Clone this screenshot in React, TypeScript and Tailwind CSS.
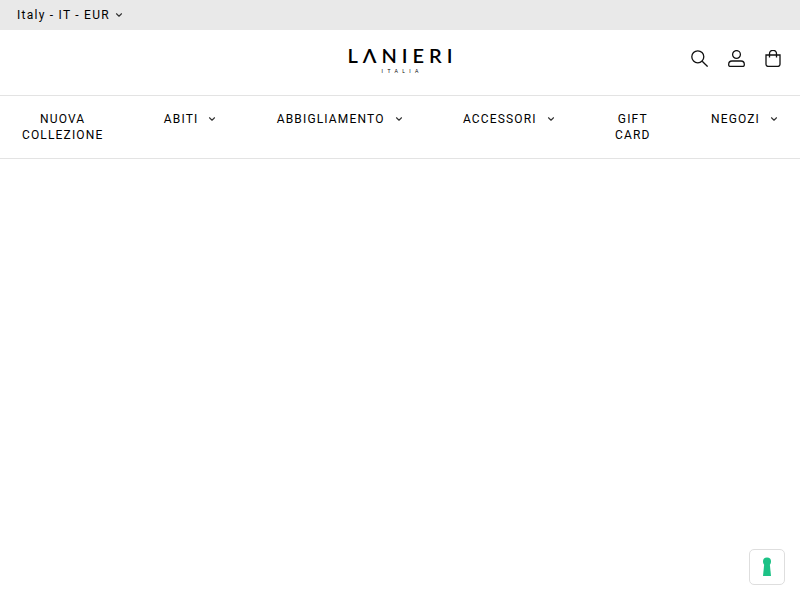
import React from 'react';
import { ChevronDown } from 'lucide-react';

const navItems = [
  { lines: ['NUOVA', 'COLLEZIONE'], caret: false },
  { lines: ['ABITI'], caret: true },
  { lines: ['ABBIGLIAMENTO'], caret: true },
  { lines: ['ACCESSORI'], caret: true },
  { lines: ['GIFT', 'CARD'], caret: false },
  { lines: ['NEGOZI'], caret: true },
];

function Logo() {
  return (
    <div className="flex flex-col items-center text-black font-['Lato',sans-serif] mt-[-7px]">
      <div className="text-[20px] leading-[20px] font-semibold tracking-[5px] mr-[-5px]">LΛNIERI</div>
      <div className="text-[5px] leading-[6px] tracking-[4.400px] mr-[-4.400px] mt-[3px]">ITALIA</div>
    </div>
  );
}

export default function App() {
  return (
    <div className="relative h-[600px] w-[800px] overflow-hidden bg-white font-['Roboto',sans-serif] text-black">
      {/* top bar */}
      <div className="flex h-[30px] items-center bg-[#e9e9e9] pl-[17px] text-[12px] tracking-[1.25px]">
        <span>Italy - IT - EUR</span>
        <ChevronDown className="ml-[4px] h-[10px] w-[10px] text-[#333]" strokeWidth={2.7} />
      </div>

      {/* header */}
      <div className="relative flex h-[66px] items-center justify-center border-b border-[#e3e3e3]">
        <Logo />
        <div className="absolute right-[19px] top-[20px] flex items-center gap-[20px]">
          <svg width="17" height="17" viewBox="0 0 17 17" fill="none" stroke="#111" strokeWidth="1.3">
            <circle cx="6.800" cy="6.800" r="6" />
            <path d="M11.200 11.200 16.600 16.600" />
          </svg>
          <svg width="17" height="17" viewBox="0 0 17 17" fill="none" stroke="#111" strokeWidth="1.3">
            <circle cx="8.500" cy="4.500" r="3.900" />
            <path d="M4 11h9a3.300 3.300 0 0 1 3.300 3.300v.8a1.300 1.300 0 0 1-1.300 1.300H2a1.300 1.300 0 0 1-1.300-1.300v-.8A3.300 3.300 0 0 1 4 11Z" />
          </svg>
          <svg width="16" height="17" viewBox="0 0 16 17" fill="none" stroke="#111" strokeWidth="1.3">
            <path d="M1 5h14v9.300a2.100 2.100 0 0 1-2.100 2.100H3.100A2.100 2.100 0 0 1 1 14.300Z" />
            <path d="M4.500 7.500V3.800a3.200 3.200 0 0 1 7 0v3.700" />
          </svg>
        </div>
      </div>

      {/* nav */}
      <nav className="flex h-[63px] items-start justify-between border-b border-[#e3e3e3] pl-[22px] pr-[22px] pt-[15px] text-[12px] leading-[16px] tracking-[1.150px]">
        {navItems.map((item) => (
          <div key={item.lines[0]} className="flex items-start">
            <div className="text-center">
              {item.lines.map((line) => (
                <div key={line}>{line}</div>
              ))}
            </div>
            {item.caret && <ChevronDown className="ml-[9px] mr-[-1px] mt-[3px] h-[10px] w-[10px] text-[#333]" strokeWidth={2.7} />}
          </div>
        ))}
      </nav>

      {/* shopify privacy badge */}
      <div className="absolute bottom-[15px] right-[15px] flex h-[36px] w-[36px] items-center justify-center rounded-[5px] border border-[#dedede] bg-white">
        <svg width="12" height="20" viewBox="0 0 12 20" fill="#1cc286">
          <circle cx="6" cy="4.500" r="4" />
          <path d="M3.300 6h5.400L10 19H2Z" />
        </svg>
      </div>
    </div>
  );
}
